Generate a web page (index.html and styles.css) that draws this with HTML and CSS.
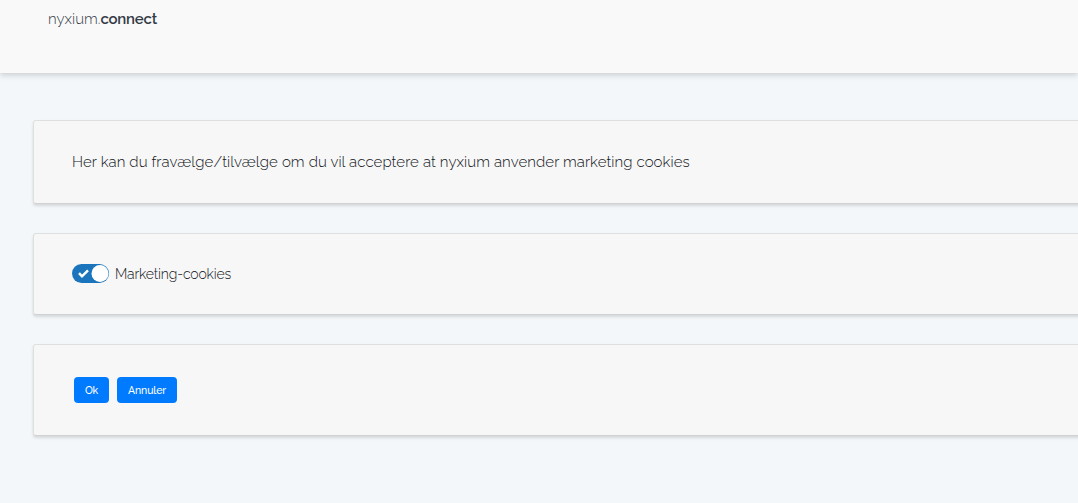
FILE: index.html
```html
<!DOCTYPE html>
<html lang="da">
<head>
<meta charset="utf-8">
<title>nyxium.connect</title>
<link rel="stylesheet" href="styles.css">
</head>
<body>
<header class="topbar"><span class="brand-light">nyxium.</span><span class="brand-bold">connect</span></header>
<main class="content">
<section class="panel panel-intro"><p class="intro">Her kan du fravælge/tilvælge om du vil acceptere at nyxium anvender marketing cookies</p></section>
<section class="panel panel-option">
<label class="option">
<svg class="switch" width="37" height="19" viewBox="0 0 37 19"><rect width="37" height="19" rx="9.5" fill="#1b75bc"/><circle cx="28" cy="9.5" r="8.5" fill="#fff"/><path d="M7 9.2l3 3.1 6-5.9" fill="none" stroke="#fff" stroke-width="2.5"/></svg>
<span class="option-text">Marketing-cookies</span>
</label>
</section>
<section class="panel panel-actions"><button class="btn btn-ok">Ok</button><button class="btn btn-cancel">Annuler</button></section>
</main>
</body>
</html>
```
FILE: styles.css
```css
* { box-sizing: border-box; }
body { margin: 0; height: 503px; overflow: hidden; background: #f3f7fa; color: #101418; font-family: Raleway, Lato, sans-serif; font-weight: 300; }
.topbar { height: 73px; padding: 9px 48px 0; background: #f9f9f9; box-shadow: 0 2px 6px rgba(0, 0, 0, .17); font-size: 15px; line-height: 20px; color: #343c48; white-space: nowrap; }
.brand-light { letter-spacing: .02px; }
.brand-bold { font-weight: 600; letter-spacing: -.22px; }
.content { display: flex; flex-direction: column; width: 1100px; padding: 47px 0 0 33px; }
.panel { display: flex; align-items: center; padding-left: 38px; background: #f7f7f7; border: 1px solid #dedfe1; border-bottom-color: #d0d1d3; border-radius: 3px; box-shadow: 0 2px 3px rgba(0, 0, 0, .12); }
.panel-intro { height: 84px; margin-bottom: 29px; }
.panel-option { height: 82px; margin-bottom: 29px; }
.panel-actions { height: 92px; gap: 8px; padding-left: 40px; }
.intro { margin: 0; font-size: 15px; line-height: 22px; letter-spacing: .093px; white-space: nowrap; }
.option { display: flex; align-items: center; gap: 6px; font-size: 14px; line-height: 20px; }
.switch { display: block; position: relative; top: -1px; }
.option-text { letter-spacing: -.16px; white-space: nowrap; }
.btn { height: 26px; padding: 0; border: 0; border-radius: 4px; background: #007bff; color: #fff; font-family: Raleway, Roboto, sans-serif; font-size: 10.5px; font-weight: 500; letter-spacing: -.15px; }
.btn-ok { width: 35px; }
.btn-cancel { width: 60px; }
```
